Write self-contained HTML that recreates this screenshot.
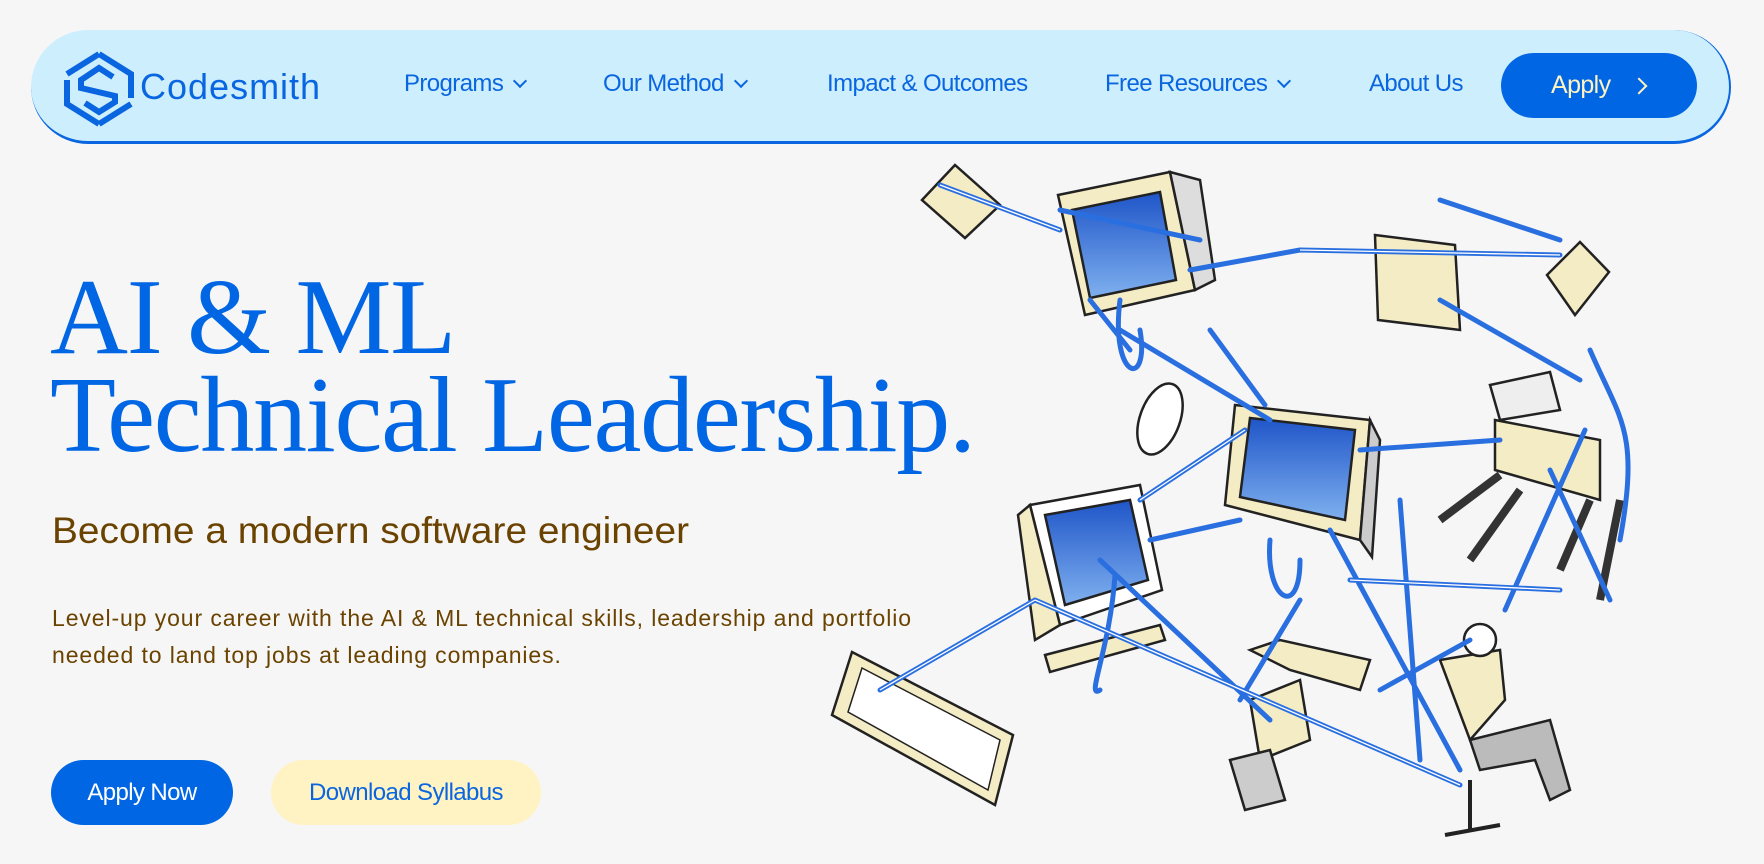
<!DOCTYPE html>
<html><head><meta charset="utf-8"><style>
*{margin:0;padding:0;box-sizing:border-box}
body{width:1764px;height:864px;overflow:hidden;background:#f6f6f6;font-family:"Liberation Sans",sans-serif;position:relative}
.nav{position:absolute;left:31px;top:30px;width:1700px;height:114px;background:#cdeffd;border-radius:57px;border-bottom:3px solid #0a66e0;border-right:2px solid #0a66e0}
.nav a{position:absolute;top:40px;color:#0a66e0;font-size:24px;letter-spacing:-0.6px;text-decoration:none}
.chev{display:inline-block;width:10px;height:10px;border-right:2.5px solid #0a66e0;border-bottom:2.5px solid #0a66e0;transform:rotate(45deg);margin-left:12px;position:relative;top:-5px}
.apply{position:absolute;left:1470px;top:23px;width:196px;height:65px;background:#0066e4;border-radius:33px;color:#fff3c0;font-size:25px;letter-spacing:-0.6px;line-height:65px;padding-left:50px}
.apply i{display:inline-block;width:12px;height:12px;border-right:2.5px solid #fff3c0;border-top:2.5px solid #fff3c0;transform:rotate(45deg);margin-left:22px;position:relative;top:-1px}
.logo{position:absolute;left:32px;top:20px}
.brand{position:absolute;left:109px;top:36px;font-size:36px;color:#0a66e0;letter-spacing:1px}
h1{position:absolute;left:50px;top:269px;font-family:"Liberation Serif",serif;font-weight:normal;color:#0066e4;font-size:108px;line-height:98px;letter-spacing:-1.3px}
h2{position:absolute;left:52px;top:510px;font-family:"Liberation Sans",sans-serif;font-weight:normal;color:#6b4300;font-size:37px;letter-spacing:0;transform:scaleX(1.05);transform-origin:left}
p{position:absolute;left:52px;top:600px;color:#6b4300;font-size:23px;line-height:37px;letter-spacing:0.9px;width:1000px}
.b1{position:absolute;left:51px;top:760px;width:182px;height:65px;border-radius:33px;background:#0066e4;color:#fff;font-size:24px;letter-spacing:-0.6px;text-align:center;line-height:65px}
.b2{position:absolute;left:271px;top:760px;width:270px;height:65px;border-radius:33px;background:#fff3c4;color:#0a66e0;font-size:24px;letter-spacing:-0.6px;text-align:center;line-height:65px}
</style></head><body>
<div class="nav">
<svg class="logo" width="72" height="78" viewBox="0 0 72 78"><g fill="none" stroke="#0a66e0" stroke-width="6"><path d="M36 4 L68 24 L68 48 M36 74 L4 54 L4 30"/><path d="M36 4 L4 24 M36 74 L68 54"/><path d="M50 27 L36 18 L18 30 L18 38 L52 46 L52 52 L36 62 L22 53"/></g></svg>
<div class="brand">Codesmith</div>
<a style="left:373px">Programs<span class="chev"></span></a>
<a style="left:572px">Our Method<span class="chev"></span></a>
<a style="left:796px">Impact &amp; Outcomes</a>
<a style="left:1074px">Free Resources<span class="chev"></span></a>
<a style="left:1338px">About Us</a>
<div class="apply">Apply<i></i></div>
</div>
<h1>AI &amp; ML<br>Technical Leadership.</h1>
<h2>Become a modern software engineer</h2>
<p>Level-up your career with the AI &amp; ML technical skills, leadership and portfolio<br>needed to land top jobs at leading companies.</p>
<div class="b1">Apply Now</div>
<div class="b2">Download Syllabus</div>
<svg style="position:absolute;left:0;top:0" width="1764" height="864" viewBox="0 0 1764 864">
<defs><linearGradient id="sky" x1="0" y1="0" x2="0" y2="1"><stop offset="0" stop-color="#1f55c8"/><stop offset="1" stop-color="#7fb0ef"/></linearGradient></defs>
<g stroke="#222" stroke-width="2.5">
<polygon points="922,200 955,165 1000,205 965,238" fill="#f4ecc4"/>
<polygon points="1058,195 1170,172 1195,290 1085,315" fill="#f4ecc4"/>
<polygon points="1072,210 1160,192 1176,280 1090,298" fill="url(#sky)"/>
<polygon points="1170,172 1200,180 1215,280 1195,290" fill="#ddd"/>
<polygon points="1235,405 1370,420 1360,540 1225,505" fill="#f4ecc4"/>
<polygon points="1250,418 1355,430 1345,520 1240,497" fill="url(#sky)"/>
<polygon points="1370,420 1380,440 1372,557 1360,540" fill="#ccc"/>
<polygon points="1030,505 1140,485 1162,590 1060,625" fill="#fff"/>
<polygon points="1045,515 1130,500 1148,580 1065,605" fill="url(#sky)"/>
<polygon points="1018,515 1030,505 1060,625 1035,640" fill="#f4ecc4"/>
<polygon points="1045,655 1160,625 1165,640 1050,672" fill="#f4ecc4"/>
<polygon points="852,652 1013,735 995,805 832,715" fill="#f4ecc4"/>
<polygon points="862,668 1000,740 988,790 848,712" fill="#fff" stroke-width="1.5"/>
<ellipse cx="1160" cy="419" rx="20" ry="37" transform="rotate(20 1160 419)" fill="#fff"/>
<polygon points="1375,235 1455,245 1460,330 1378,320" fill="#f4ecc4"/>
<polygon points="1547,275 1580,242 1609,272 1575,315" fill="#f4ecc4"/>
<polygon points="1495,420 1600,440 1600,500 1495,470" fill="#f4ecc4"/>
<polygon points="1490,385 1550,372 1560,410 1500,420" fill="#eee"/>
<path d="M1440 520 L1500 475 M1470 560 L1520 490 M1560 570 L1590 500 M1600 600 L1620 500" stroke-width="8" stroke="#333"/>
<path d="M1440 660 L1500 650 L1505 700 L1470 740 Z" fill="#f4ecc4"/>
<path d="M1470 740 L1550 720 L1570 790 L1550 800 L1535 760 L1480 770 Z" fill="#bbb"/>
<circle cx="1480" cy="640" r="16" fill="#fff"/>
<path d="M1470 780 L1470 830 M1445 835 L1500 825" stroke-width="4"/>
<path d="M1250 650 L1280 640 L1370 660 L1360 690 L1290 670 Z" fill="#f4ecc4"/>
<path d="M1250 700 L1300 680 L1310 740 L1260 760 Z" fill="#f4ecc4"/>
<path d="M1230 760 L1270 750 L1285 800 L1245 810 Z" fill="#ccc"/>
</g>
<g fill="none" stroke="#2a6fe0" stroke-width="5" stroke-linecap="round">
<path d="M940 185 L1060 230 M1190 270 L1300 250 M1300 250 L1560 255 M1440 300 L1580 380 M1210 330 L1265 405 M1120 330 L1270 420 M1360 450 L1500 440 M1150 540 L1240 520 M1140 500 L1245 430 M880 690 L1035 600 M1035 600 L1460 785 M1100 560 L1270 720 M1330 530 L1460 770 M1380 690 L1470 640 M1505 610 L1585 430 M1350 580 L1560 590 M1440 200 L1560 240 M1060 210 L1200 240 M1130 350 L1090 300 M1300 600 L1240 700 M1400 500 L1420 760 M1550 470 L1610 600"/>
<path d="M1115 575 C1110 650 1085 700 1100 690 M1270 540 C1265 600 1300 620 1300 560 M1120 300 C1110 380 1150 390 1140 330 M1590 350 C1620 420 1640 430 1620 540"/>
</g>
<g fill="none" stroke="#fff" stroke-width="1.3">
<path d="M940 185 L1060 230 M1300 250 L1560 255 M1035 600 L1460 785 M880 690 L1035 600 M1140 500 L1245 430 M1350 580 L1560 590"/>
</g>
</svg>
</body></html>
